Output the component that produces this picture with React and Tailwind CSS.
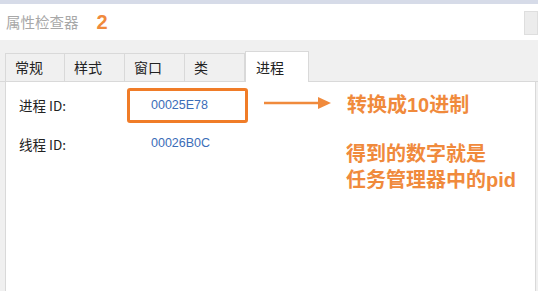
import React from 'react';

const tabs = ['常规', '样式', '窗口', '类'];
const noteFont = { fontFamily: '"Liberation Sans", "Noto Sans CJK SC", sans-serif' };

function Arrow() {
  return (
    <svg width="68" height="14" viewBox="0 0 68 14" className="shrink-0">
      <line x1="0" y1="7" x2="56" y2="7" stroke="#f08a3c" strokeWidth="2.5" />
      <path d="M54 1 L67 7 L54 13 Z" fill="#f08a3c" />
    </svg>
  );
}

export default function App() {
  return (
    <div className="w-[538px] h-[291px] overflow-hidden bg-white flex flex-col text-[#222]" style={{ fontFamily: '"Noto Sans CJK SC", "Liberation Sans", sans-serif' }}>
      <div className="h-[4px] bg-[#d6dbe8] shrink-0" />
      <div className="h-[36px] flex items-center shrink-0 pl-[6px]">
        <span className="text-[14.5px] text-[#a8a8a8]">属性检查器</span>
        <span className="ml-[18px] text-[20px] font-bold text-[#f08a3c] leading-none" style={{ fontFamily: '"Liberation Sans", sans-serif' }}>2</span>
        <div className="ml-auto w-[14px] h-[24px] bg-[#ececec] border border-[#dedede] mt-[2px]" />
      </div>
      <div className="flex-1 bg-[#f0f0f0] flex flex-col pt-[12px]">
        <div className="flex items-end pl-[5px] h-[30px] shrink-0 border-b border-[#d9d9d9]">
          {tabs.map((t, i) => (
            <div key={t} className={`w-[60px] h-[28px] flex items-center pl-[9px] text-[14px] ${i === 0 ? 'border-l' : ''} border-r border-t border-[#d9d9d9] bg-[#f0f0f0]`}>{t}</div>
          ))}
          <div className="w-[64px] h-[31px] -mb-px flex items-center pl-[10px] text-[14px] bg-white border-x border-t border-[#d9d9d9]">进程</div>
        </div>
        <div className="flex-1 ml-[5px] mr-[2px] bg-white border-x border-[#d9d9d9] relative">
          <div className="flex items-center h-[40px] mt-[3px]">
            <span className="w-[121px] pl-[13px] text-[13.5px]">进程 ID:</span>
            <div className="w-[121px] h-[35px] border-[3px] border-[#f07c28] rounded-[3px] flex items-center pl-[21px] text-[12.5px] text-[#3b6db8]" style={{ fontFamily: '"Liberation Sans", sans-serif' }}>00025E78</div>
            <div className="ml-[16px] mt-[-4px]"><Arrow /></div>
            <span className="ml-[15px] text-[20px] font-bold text-[#f08a3c]" style={noteFont}>转换成10进制</span>
          </div>
          <div className="flex">
            <div className="flex items-center h-[38px] self-start">
              <span className="w-[124px] pl-[13px] text-[13.5px]">线程 ID:</span>
              <span className="pl-[21px] text-[12.5px] text-[#3b6db8] mt-[-2px]" style={{ fontFamily: '"Liberation Sans", sans-serif' }}>00026B0C</span>
            </div>
            <div className="ml-[136px] mt-[16px] text-[20px] font-bold text-[#f08a3c] leading-[26px]" style={noteFont}>
              <div>得到的数字就是</div>
              <div>任务管理器中的pid</div>
            </div>
          </div>
        </div>
      </div>
    </div>
  );
}
